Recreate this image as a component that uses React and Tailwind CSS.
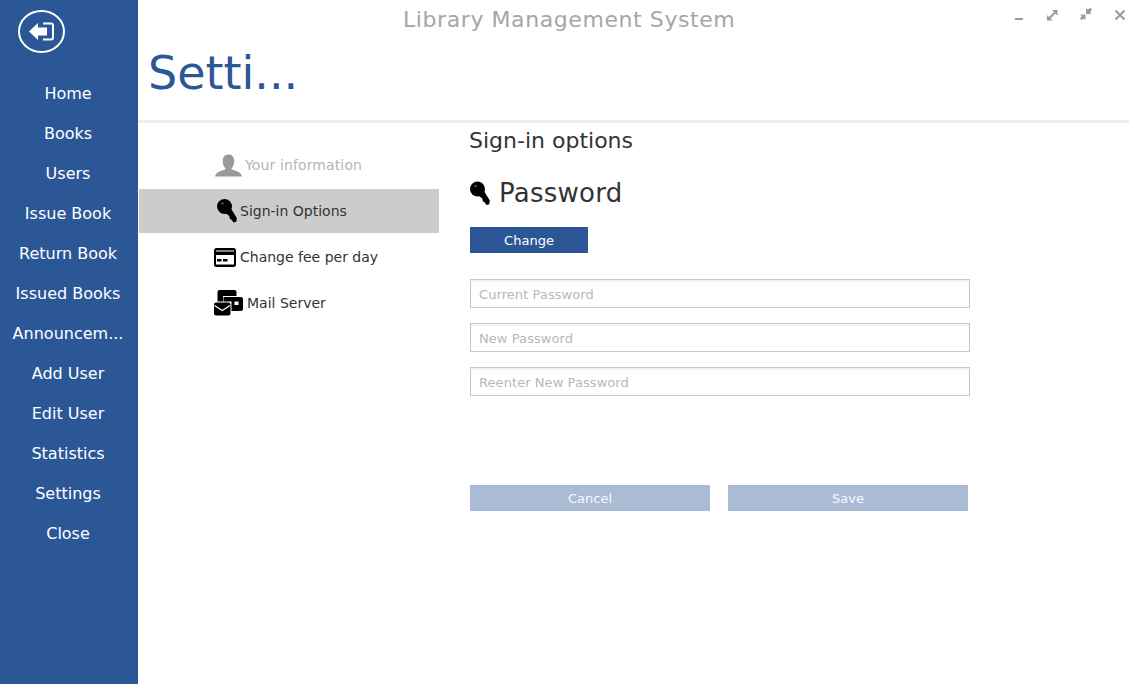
import React from 'react'

const NAV = ['Home', 'Books', 'Users', 'Issue Book', 'Return Book', 'Issued Books', 'Announcem...', 'Add User', 'Edit User', 'Statistics', 'Settings', 'Close']

// ── Icons ─────────────────────────────────────────────────────────────────────
function BackIcon() {
  return (
    <svg width="48" height="44" viewBox="0 0 48 44" className="block">
      <ellipse cx="23.5" cy="21.5" rx="22.5" ry="20.5" fill="none" stroke="#fff" strokeWidth="2" />
      <path d="M11 21.5 L20 13 V17.5 H29 V25.5 H20 V30 Z" fill="#fff" />
      <path d="M25 13.500 H33 Q35 13.500 35 15.500 V27.500 Q35 29.500 33 29.500 H25" fill="none" stroke="#fff" strokeWidth="2" />
    </svg>
  )
}

function KeyIcon({ className }) {
  return (
    <svg viewBox="0 0 20 24" className={className}>
      <circle cx="7.5" cy="7.5" r="7.5" fill="#000" />
      <circle cx="5.5" cy="4.5" r="1" fill="#777" />
      <path d="M7 13 L13 8 L19.800 19 L19.300 22.800 L16.500 23.500 L14.500 20.800 L12.800 19.800 L12.300 17 Z" fill="#000" />
    </svg>
  )
}

function PersonIcon() {
  return (
    <svg width="27" height="23" viewBox="0 0 28 23" className="block">
      <path d="M14 0 C18 0 20 3 20 7 C20 10.500 18.500 13 17 14.500 V15.500 C20 17 27 17.500 28 23 H0 C1 17.500 8 17 11 15.500 V14.500 C9.500 13 8 10.500 8 7 C8 3 10 0 14 0 Z" fill="#999" />
    </svg>
  )
}

function CardIcon() {
  return (
    <svg width="22" height="19" viewBox="0 0 22 19" className="block">
      <rect width="22" height="19" rx="2.500" fill="#000" />
      <rect x="2" y="2.500" width="18" height="1" fill="#fff" />
      <rect x="2" y="7" width="18" height="9.500" fill="#fff" />
      <rect x="3" y="11" width="4.500" height="2.500" fill="#000" />
      <rect x="9" y="11" width="4.500" height="2.500" fill="#000" />
    </svg>
  )
}

function MailIcon() {
  return (
    <svg width="29" height="26" viewBox="0 0 29 26" className="block">
      <path d="M3.500 2 Q3.500 0 5.500 0 H20.500 Q22.500 0 22.500 2 V6 H9 V11.500 H3.500 Z" fill="#000" />
      <path d="M9.500 7 H27 Q29 7 29 9 V19 Q29 21 27 21 H17.500 V11.500 H9.500 Z" fill="#000" />
      <rect x="20.500" y="11.500" width="4" height="3.500" fill="#fff" />
      <rect x="0" y="12.500" width="16.500" height="13" rx="2" fill="#000" />
      <path d="M0.500 15.500 L8.250 20.500 L16 15.500" fill="none" stroke="#fff" strokeWidth="1.200" />
    </svg>
  )
}

function WindowControls() {
  return (
    <div className="absolute top-[8px] right-[3px] flex items-start">
      <svg width="12" height="14" viewBox="0 0 12 14" className="mr-[20px]">
        <rect x="0" y="10" width="8" height="2" fill="#9a9a9a" />
      </svg>
      <svg width="12" height="12" viewBox="0 0 12 12" className="mr-[21px] mt-[2px]">
        <path d="M5 0 H10.500 V5.500 Z M0 5 V10.500 H5.500 Z M2 7 L7 2 L8.500 3.500 L3.500 8.500 Z" fill="#9a9a9a" />
      </svg>
      <svg width="12" height="12" viewBox="0 0 12 12" className="mr-[22px]">
        <path d="M6 0 L7.500 1.500 L10.500 0 L12 1.500 L10 4.500 L11.500 6 H6 Z M0 6.500 H5.500 V12 L4 10.500 L1.500 12 L0 10.500 L2 8 Z" fill="#9a9a9a" />
      </svg>
      <svg width="12" height="12" viewBox="0 0 12 12" className="mt-[1px]">
        <path d="M1.500 1.500 L10.500 10.500 M10.500 1.500 L1.500 10.500" stroke="#9a9a9a" strokeWidth="2" />
      </svg>
    </div>
  )
}

function SettingsRow({ icon, label, active, muted, iconBox, gap }) {
  return (
    <div className={`h-[44px] flex items-center pl-[75px] text-[14px] ${active ? 'bg-[#cccccc]' : ''} ${muted ? 'text-[#b5b5b5] tracking-[0.12px]' : 'text-[#333333]'}`}>
      <div className={`flex justify-center shrink-0 ${iconBox} ${gap}`}>{icon}</div>
      <span>{label}</span>
    </div>
  )
}

function PasswordInput({ placeholder }) {
  return (
    <input
      placeholder={placeholder}
      className="block w-[500px] h-[29px] px-2 pt-[2px] border border-[#c6c6c6] shadow-[inset_0_2px_2px_rgba(0,0,0,0.06)] text-[13px] tracking-[0.07px] placeholder:text-[#b8b8b8] outline-none"
    />
  )
}

export default function App() {
  return (
    <div className="relative flex h-[684px] w-[1129px] overflow-hidden bg-white font-['DejaVu_Sans',sans-serif] text-[#333333]">
      {/* ── Sidebar ── */}
      <aside className="w-[138px] shrink-0 bg-[#2b5797] text-white pr-[2px]">
        <div className="pt-[10px] pl-[18px] h-[74px]">
          <BackIcon />
        </div>
        <nav className="flex flex-col">
          {NAV.map(item => (
            <div key={item} className="h-[40px] flex items-center justify-center text-[16px] whitespace-nowrap">{item}</div>
          ))}
        </nav>
      </aside>

      <main className="flex-1 min-w-0 flex flex-col">
        {/* ── Header ── */}
        <header className="h-[123px] shrink-0 border-b-[3px] border-[#eeeeee]">
          <div className="pt-[5px] pl-[265px] text-[22px] leading-[30px] text-[#a6a6a6] tracking-[0.58px] whitespace-nowrap">Library Management System</div>
          <div className="pt-[10px] pl-[10px] text-[46px] leading-[56px] text-[#2b5797]">Setti...</div>
        </header>

        <div className="flex flex-1 min-h-0">
          {/* ── Settings list ── */}
          <div className="w-[301px] shrink-0 pt-[20px] pl-px flex flex-col gap-[2px]">
            <SettingsRow icon={<PersonIcon />} label="Your information" muted iconBox="w-[28px]" gap="mr-[3px]" />
            <SettingsRow icon={<KeyIcon className="block w-[20px] h-[24px]" />} label="Sign-in Options" active iconBox="w-[26px]" gap="" />
            <SettingsRow icon={<CardIcon />} label="Change fee per day" iconBox="w-[22px]" gap="mr-[4px]" />
            <SettingsRow icon={<MailIcon />} label="Mail Server" iconBox="w-[29px]" gap="mr-[4px]" />
          </div>

          {/* ── Sign-in options panel ── */}
          <div className="flex-1 pl-[31px]">
            <h2 className="-ml-px mt-[3px] text-[22px] leading-[30px] font-normal">Sign-in options</h2>
            <div className="flex items-center mt-[16px] h-[42px]">
              <KeyIcon className="block w-[20px] h-[25px]" />
              <span className="ml-[9px] text-[26px] leading-[36px] tracking-[0.25px]">Password</span>
            </div>
            <button className="block mt-[13px] w-[118px] h-[26px] pt-[2px] bg-[#2b5797] text-white text-[13px]">Change</button>
            <div className="mt-[26px] flex flex-col gap-[15px]">
              <PasswordInput placeholder="Current Password" />
              <PasswordInput placeholder="New Password" />
              <PasswordInput placeholder="Reenter New Password" />
            </div>
            <div className="mt-[89px] flex gap-[18px]">
              <button className="w-[240px] h-[26px] pt-[2px] bg-[#aabbd6] text-white/90 text-[13px]">Cancel</button>
              <button className="w-[240px] h-[26px] pt-[2px] bg-[#aabbd6] text-white/90 text-[13px]">Save</button>
            </div>
          </div>
        </div>
      </main>

      <WindowControls />
    </div>
  )
}
